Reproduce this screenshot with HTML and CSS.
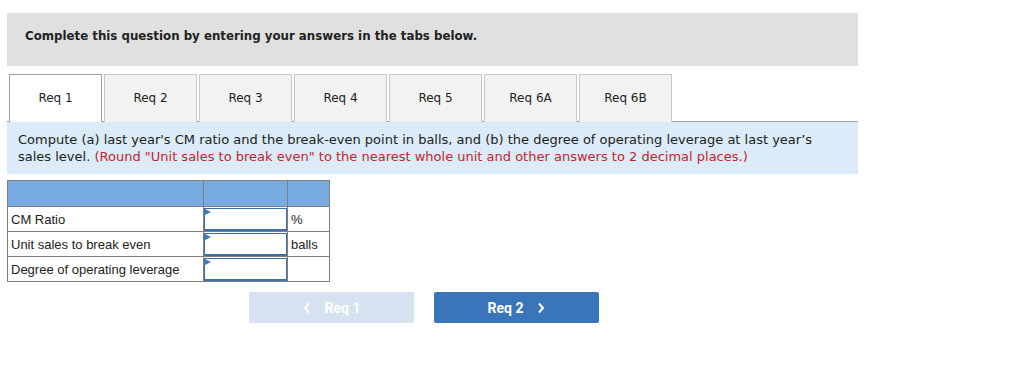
FILE: index.html
```html
<!DOCTYPE html>
<html>
<head>
<meta charset="utf-8">
<link rel="stylesheet" href="styles.css">
</head>
<body>
<div class="wrap">
  <div class="banner">Complete this question by entering your answers in the tabs below.</div>
  <div class="tabs">
    <div class="tab active">Req 1</div>
    <div class="tab">Req 2</div>
    <div class="tab">Req 3</div>
    <div class="tab">Req 4</div>
    <div class="tab">Req 5</div>
    <div class="tab">Req 6A</div>
    <div class="tab">Req 6B</div>
  </div>
  <div class="prompt"><span>Compute (a) last year's CM ratio and the break-even point in balls, and (b) the degree of operating leverage at last year’s</span> <span>sales level.</span> <span class="red">(Round "Unit sales to break even" to the nearest whole unit and other answers to 2 decimal places.)</span></div>
  <table class="grid">
    <tr class="head"><td class="c1"></td><td class="c2"></td><td class="c3"></td></tr>
    <tr><td class="c1">CM Ratio</td><td class="c2"><div class="inp"><span class="tri"></span></div></td><td class="c3">%</td></tr>
    <tr><td class="c1">Unit sales to break even</td><td class="c2"><div class="inp"><span class="tri"></span></div></td><td class="c3">balls</td></tr>
    <tr><td class="c1">Degree of operating leverage</td><td class="c2"><div class="inp"><span class="tri"></span></div></td><td class="c3"></td></tr>
  </table>
  <div class="nav">
    <div class="btn prev"><svg class="chev" width="8" height="12" viewBox="0 0 8 12"><path d="M6 1.5 L2 6 L6 10.5" fill="none" stroke="#fff" stroke-width="2"/></svg><span>Req 1</span></div>
    <div class="btn next"><span>Req 2</span><svg class="chev" width="8" height="12" viewBox="0 0 8 12"><path d="M2 1.5 L6 6 L2 10.5" fill="none" stroke="#fff" stroke-width="2"/></svg></div>
  </div>
</div>
</body>
</html>
```
FILE: styles.css
```css
html, body { margin: 0; padding: 0; background: #fff; }
body { font-family: "DejaVu Sans", Verdana, sans-serif; color: #222; }
.wrap { width: 851px; margin: 13px 0 0 7px; }
.banner {
  background: #e0e0e0;
  height: 53px;
  box-sizing: border-box;
  padding: 15px 0 0 18px;
  font-weight: bold;
  font-size: 11.8px;
  line-height: 16px;
  color: #222;
}
.tabs {
  display: flex;
  gap: 2px;
  margin-top: 8px;
  padding-left: 2px;
  border-bottom: 1px solid #a0a0a0;
  height: 47px;
}
.tab {
  width: 93px;
  box-sizing: border-box;
  height: 48px;
  border: 1px solid #c8c8c8;
  border-bottom: none;
  background: #f2f2f2;
  font-size: 12px;
  line-height: 46px;
  text-align: center;
  color: #222;
}
.tab.active {
  background: #fff;
  border-color: #a0a0a0;
  position: relative;
  z-index: 1;
}
.prompt {
  background: #dbebf8;
  padding: 9px 11px 9px 11px;
  font-size: 13px;
  line-height: 17px;
  color: #222;
}
.red { color: #c5242c; }
.grid {
  border-collapse: collapse;
  margin-top: 6px;
  font-family: "Liberation Sans", Arial, sans-serif;
  font-size: 13px;
  color: #222;
}
.grid td {
  border: 1px solid #7f7f7f;
  padding: 0 0 0 3px;
  height: 24px;
}
.grid .head td { background: #77abe2; height: 25px; }
.grid .c1 { width: 192px; }
.grid .c2 { width: 83px; padding: 0; }
.grid .c3 { width: 38px; }
.inp {
  position: relative;
  height: 23px;
  box-sizing: border-box;
  border: 1px solid #3d6ea8;
  border-bottom-width: 2px;
  background: #fff;
}
.tri {
  position: absolute;
  left: 0;
  top: 0;
  width: 0; height: 0;
  border-top: 3px solid transparent;
  border-bottom: 3px solid transparent;
  border-left: 6px solid #3a78c3;
}
.nav {
  display: flex;
  gap: 20px;
  margin: 10px 0 0 242px;
}
.btn {
  width: 165px;
  height: 31px;
  border-radius: 2px;
  display: flex;
  align-items: center;
  justify-content: center;
  gap: 14px;
  color: #fff;
  font-family: Roboto, "Liberation Sans", sans-serif;
  font-weight: bold;
  font-size: 14px;
}
.prev { background: #d6e2f0; }
.next { background: #3a75b9; }
```
